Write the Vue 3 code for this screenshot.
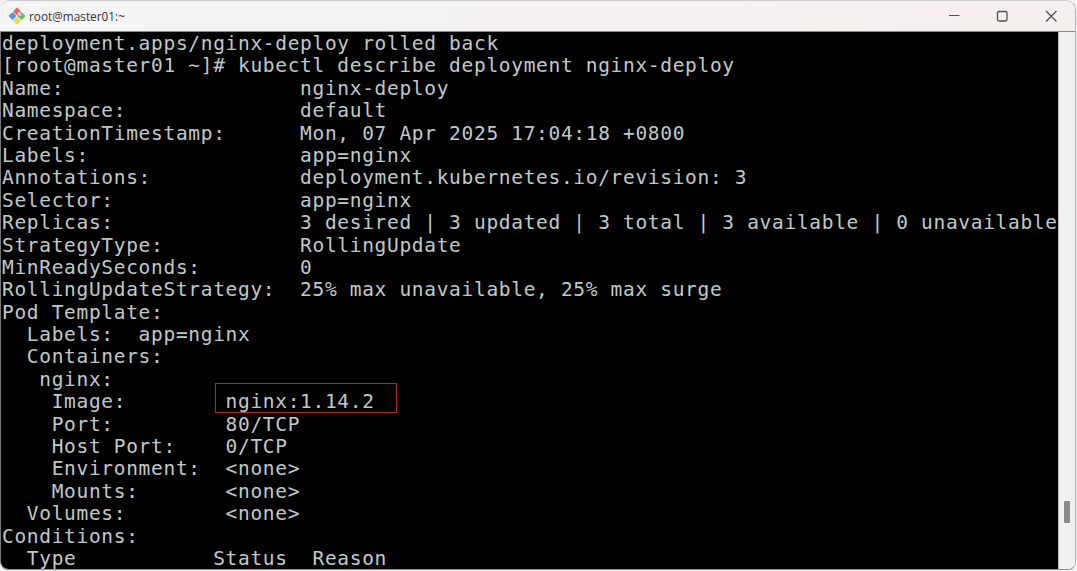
<script setup>
const lines = [
  'deployment.apps/nginx-deploy rolled back',
  '[root@master01 ~]# kubectl describe deployment nginx-deploy',
  'Name:                   nginx-deploy',
  'Namespace:              default',
  'CreationTimestamp:      Mon, 07 Apr 2025 17:04:18 +0800',
  'Labels:                 app=nginx',
  'Annotations:            deployment.kubernetes.io/revision: 3',
  'Selector:               app=nginx',
  'Replicas:               3 desired | 3 updated | 3 total | 3 available | 0 unavailable',
  'StrategyType:           RollingUpdate',
  'MinReadySeconds:        0',
  'RollingUpdateStrategy:  25% max unavailable, 25% max surge',
  'Pod Template:',
  '  Labels:  app=nginx',
  '  Containers:',
  '   nginx:',
  '    Image:        nginx:1.14.2',
  '    Port:         80/TCP',
  '    Host Port:    0/TCP',
  '    Environment:  <none>',
  '    Mounts:       <none>',
  '  Volumes:        <none>',
  'Conditions:',
  '  Type           Status  Reason',
]
</script>

<template>
  <div class="page">
    <div class="window">
      <header class="titlebar">
        <div class="title">
          <svg class="logo" width="18" height="18" viewBox="0 0 18 18">
            <g stroke-width="1.500" stroke-linejoin="round">
              <path d="M9 1.500 12 4.500 9 7.500 6 4.500Z" fill="#e9635a" stroke="#e9635a" />
              <path d="M13.500 6 16.500 9 13.500 12 10.500 9Z" fill="#62bd6b" stroke="#62bd6b" />
              <path d="M9 10.500 12 13.500 9 16.500 6 13.500Z" fill="#f4d35e" stroke="#f4d35e" />
              <path d="M4.500 6 7.500 9 4.500 12 1.500 9Z" fill="#4f9be0" stroke="#4f9be0" />
            </g>
            <path d="M10 5.500 13 8.500" stroke="#f7f5f4" stroke-width="1.300" fill="none" />
          </svg>
          <span>root@master01:~</span>
        </div>
        <div class="controls">
          <svg width="14" height="14" viewBox="0 0 14 14"><path d="M2 6.500H12.500" stroke="#505050" stroke-width="1.200" /></svg>
          <svg width="14" height="14" viewBox="0 0 14 14"><rect x="2.500" y="2.500" width="9.500" height="9.500" rx="1.500" fill="none" stroke="#505050" stroke-width="1.300" /></svg>
          <svg width="14" height="14" viewBox="0 0 14 14"><path d="M2 2 12.500 12.500M12.500 2 2 12.500" stroke="#505050" stroke-width="1.300" /></svg>
        </div>
      </header>
      <div class="body">
        <main class="term">
          <div v-for="(line, i) in lines" :key="i" class="line">{{ line }}</div>
          <div class="mark"></div>
        </main>
        <aside class="scroll"><div class="thumb"></div></aside>
      </div>
    </div>
  </div>
</template>

<style scoped>
.page { width: 1077px; height: 571px; background: #f4f3f2; overflow: hidden; }
.window {
  width: 1076px; height: 570px; display: flex; flex-direction: column;
  background: #f3f0ef; border-radius: 10px 10px 8px 8px; border-right: 1px solid #b5b5b5; border-bottom: 1px solid #8f8f8f;
  border-top: 1px solid #c9c9c9; box-sizing: border-box; overflow: hidden;
}
.titlebar { height: 31px; flex: none; display: flex; justify-content: space-between; align-items: center; border-bottom: 1px solid #8a8a8a; box-sizing: border-box; background: linear-gradient(90deg, #f5f5f5, #f5f0ee); }
.title { display: flex; align-items: center; gap: 3px; padding-left: 8px; font: 11.8px "Open Sans", sans-serif; color: #333; }
.controls { display: flex; align-items: center; gap: 34.5px; padding-right: 17.5px; }
.body { flex: 1; display: flex; min-height: 0; }
.term { position: relative; flex: 1; background: #000; border-left: 1px solid #777; border-bottom-left-radius: 8px; overflow: hidden; padding-top: 1px; }
.line { height: 22.4px; line-height: 22.4px; padding-left: 1px; white-space: pre; font-family: "DejaVu Sans Mono", monospace; font-size: 19.5px; letter-spacing: 0.68px; color: #c2c8c9; }
.mark { position: absolute; left: 214px; top: 351px; width: 182px; height: 30px; border: 1px solid #b02a2a; box-sizing: border-box; }
.scroll { width: 17px; flex: none; background: #f0f0f0; border-left: 1px solid #bbb; box-sizing: border-box; position: relative; }
.thumb { position: absolute; left: 5px; top: 469px; width: 6px; height: 22px; background: #8b8b8b; border-radius: 1px; }
</style>
